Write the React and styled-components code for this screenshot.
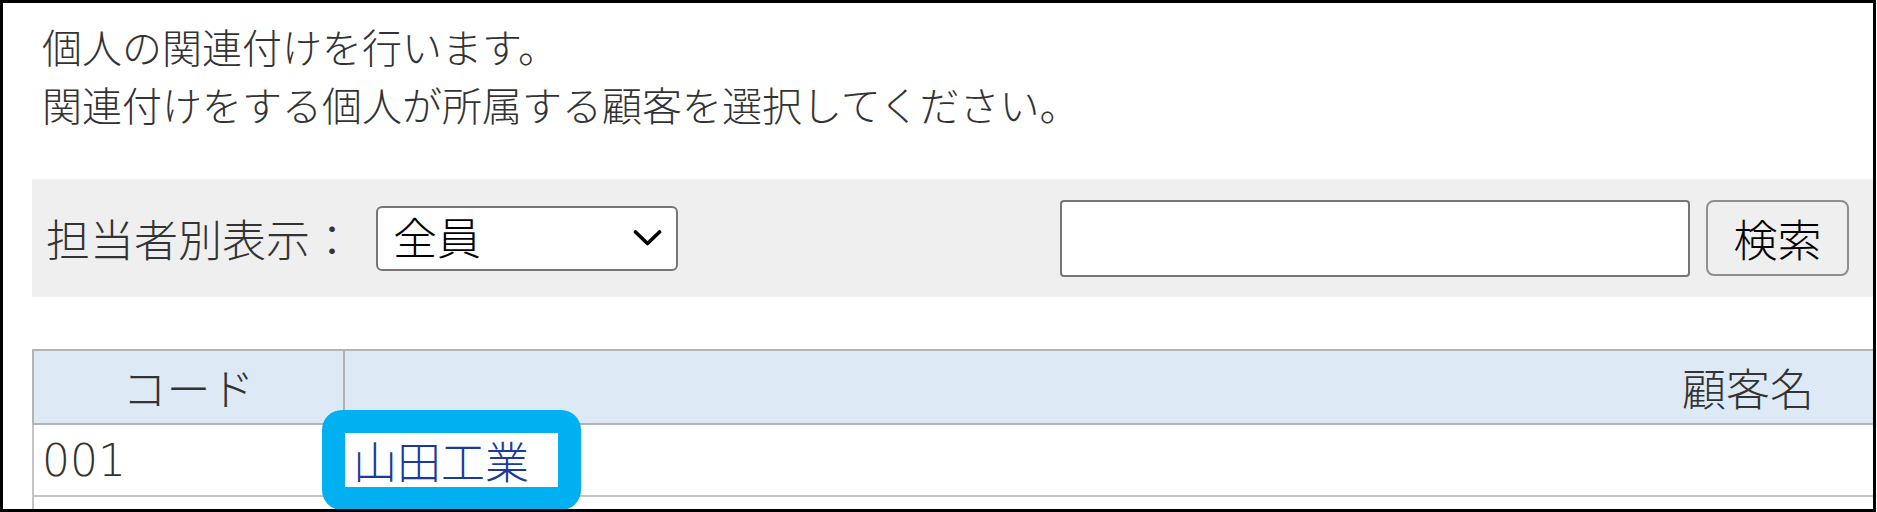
import styled, { createGlobalStyle } from "styled-components";

const GlobalStyle = createGlobalStyle`
  body {
    margin: 0;
    background: #fff;
    font-family: "Noto Sans", "Noto Sans CJK JP", sans-serif;
    font-weight: 300;
  }
`;

const Frame = styled.div`
  box-sizing: border-box;
  width: 1876px;
  height: 512px;
  border: 3px solid #000;
  padding-left: 29px;
  overflow: hidden;
  background: #fff;
`;

const Intro = styled.p`
  margin: 0;
  padding: 16px 0 0 10px;
  font-size: 40px;
  line-height: 58px;
  color: #333;
`;

const FilterBar = styled.div`
  display: flex;
  align-items: center;
  justify-content: space-between;
  height: 118px;
  margin-top: 44px;
  padding: 0 24px 0 14px;
  background: #efefef;
`;

const Group = styled.div`
  display: flex;
  align-items: center;
  gap: ${(p) => p.$gap || 0}px;
`;

const Label = styled.label`
  font-size: 44px;
  color: #333;
`;

const SelectWrap = styled.div`
  position: relative;
  width: 302px;
  height: 65px;
`;

const Select = styled.select`
  appearance: none;
  box-sizing: border-box;
  width: 100%;
  height: 100%;
  padding: 0 0 0 15px;
  border: 2px solid #767676;
  border-radius: 6px;
  background: #fff;
  color: #000;
  font-family: inherit;
  font-weight: 300;
  font-size: 44px;
`;

const Chevron = styled.svg`
  position: absolute;
  right: 16px;
  top: 50%;
  transform: translateY(-50%);
  pointer-events: none;
`;

const SearchInput = styled.input`
  box-sizing: border-box;
  width: 630px;
  height: 77px;
  border: 2px solid #767676;
  border-radius: 4px;
  background: #fff;
  font-size: 40px;
`;

const Button = styled.button`
  box-sizing: border-box;
  width: 143px;
  height: 76px;
  padding: 0;
  border: 2px solid #8f8f8f;
  border-radius: 8px;
  background: #efefef;
  color: #000;
  font-family: inherit;
  font-weight: 300;
  font-size: 44px;
`;

const Table = styled.table`
  margin-top: 52px;
  width: 3121px;
  table-layout: fixed;
  border-collapse: collapse;
`;

const Th = styled.th`
  height: 72px;
  padding: 0;
  border: 2px solid #b4b4b4;
  background: #ddeaf6;
  color: #333;
  font-size: 44px;
  font-weight: 300;
  text-align: center;
`;

const Td = styled.td`
  position: relative;
  height: 70px;
  padding: 0 8px;
  border: 2px solid #c4c4c4;
  color: #333;
  font-family: ${(p) => (p.$code ? '"DejaVu Sans", "Noto Sans", sans-serif' : "inherit")};
  font-size: 44px;
`;

const Link = styled.a`
  color: #1b3a9e;
  text-decoration: none;
`;

const Callout = styled.span`
  position: absolute;
  left: -23px;
  top: -15px;
  box-sizing: border-box;
  width: 259px;
  height: 100px;
  border: 23px solid #00b0f0;
  border-radius: 20px;
  pointer-events: none;
`;

const App = () => {
  return (
    <>
      <GlobalStyle />
      <Frame>
        <Intro>
          個人の関連付けを行います。
          <br />
          関連付けをする個人が所属する顧客を選択してください。
        </Intro>
        <FilterBar>
          <Group $gap={22}>
            <Label htmlFor="staff">担当者別表示：</Label>
            <SelectWrap>
              <Select id="staff" defaultValue="all">
                <option value="all">全員</option>
              </Select>
              <Chevron width="29" height="17" viewBox="0 0 29 17">
                <polyline
                  points="2.5,2.5 14.5,14 26.5,2.5"
                  fill="none"
                  stroke="#000"
                  strokeWidth="3.6"
                  strokeLinecap="round"
                  strokeLinejoin="round"
                />
              </Chevron>
            </SelectWrap>
          </Group>
          <Group $gap={16}>
            <SearchInput type="text" />
            <Button type="button">検索</Button>
          </Group>
        </FilterBar>
        <Table>
          <colgroup>
            <col style={{ width: 311 }} />
            <col />
          </colgroup>
          <thead>
            <tr>
              <Th>コード</Th>
              <Th>顧客名</Th>
            </tr>
          </thead>
          <tbody>
            <tr>
              <Td $code>001</Td>
              <Td>
                <Link href="#">山田工業</Link>
                <Callout />
              </Td>
            </tr>
            <tr>
              <Td />
              <Td />
            </tr>
          </tbody>
        </Table>
      </Frame>
    </>
  );
};

export default App;
